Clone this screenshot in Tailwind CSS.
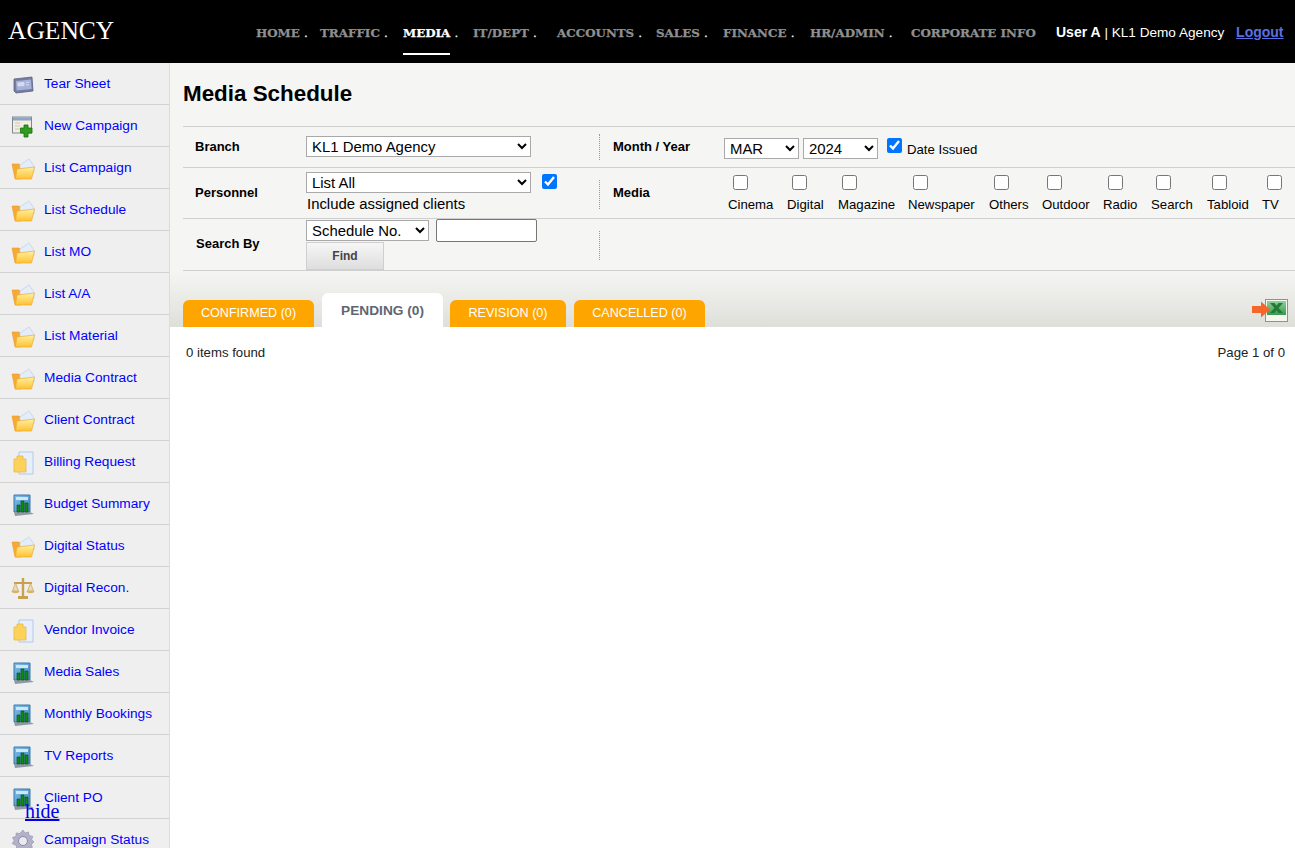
<!DOCTYPE html>
<html lang="en">
<head>
    <meta charset="UTF-8">
    <title>Media Schedule</title>
    <script src="https://cdn.jsdelivr.net/npm/@tailwindcss/browser@4"></script>
</head>
<body class="h-[848px] overflow-hidden bg-white font-['Liberation_Sans',Arial,sans-serif] relative">

    <!-- icon sprites -->
    <svg class="absolute w-0 h-0">
        <defs>
            <linearGradient id="fold" x1="0" y1="0" x2="0" y2="1"><stop offset="0" stop-color="#fff0a0"/><stop offset="1" stop-color="#fdc233"/></linearGradient>
            <linearGradient id="xls" x1="0" y1="0" x2="0" y2="1"><stop offset="0" stop-color="#8fd09b"/><stop offset="1" stop-color="#3a9a50"/></linearGradient>
            <linearGradient id="panel" x1="0" y1="0" x2="1" y2="1"><stop offset="0" stop-color="#7fc0ea"/><stop offset="1" stop-color="#3f86bd"/></linearGradient>
            <symbol id="i-folder" viewBox="0 0 24 24">
                <path d="M1 7h7l2 2v13H4z" fill="#f6a935" stroke="#ec9a2a" stroke-width=".6"/>
                <path d="M9 8l9-6 5 7v6H9z" fill="#e4edf9" stroke="#bcd0ea" stroke-width=".7"/>
                <path d="M4.500 22l1.500-10 17.500-2-3 12z" fill="url(#fold)" stroke="#f0ab2e" stroke-width=".7"/>
            </symbol>
            <symbol id="i-tear" viewBox="0 0 24 24">
                <path d="M3 6l18-2 1 14-17 2-2-2z" fill="#777d9e" stroke="#5d6283" stroke-width=".8"/>
                <path d="M5 8l15-1.500.6 9.500-15 1.500z" fill="#a6b2dc"/>
                <path d="M7 10l6-.5v3l-6 .5zM15 9.500l3-.3M15 12l3-.3" fill="#d5dbf2" stroke="#d5dbf2"/>
            </symbol>
            <symbol id="i-new" viewBox="0 0 24 24">
                <rect x="1.500" y="2" width="19" height="16" fill="#f2efe0" stroke="#7f8a90"/>
                <rect x="2" y="2.500" width="18" height="3" fill="#8ea4c4"/>
                <path d="M4 8h5M4 11h5M4 14h5" stroke="#c9c6b2"/>
                <path d="M13 10h4v3h4v5h-4v4h-4v-4H9.500v-5H13z" fill="#2f9d20" stroke="#1b6d12" stroke-width=".8"/>
            </symbol>
            <symbol id="i-doc" viewBox="0 0 24 24">
                <path d="M8 1h14v22H8z" fill="#e6effb" stroke="#b3c9e8"/>
                <path d="M3 8h3V5h6v3h3v13H3z" fill="#fcd25a" stroke="#edb745" stroke-width=".8"/>
            </symbol>
            <symbol id="i-chart" viewBox="0 0 24 24">
                <path d="M3 2h16v17H3z" fill="url(#panel)" stroke="#3c79aa"/>
                <path d="M3 19h16l4 2-19 2z" fill="#8d9aa5"/>
                <path d="M5 4h12v3H5z" fill="#cfe6f6"/>
                <path d="M6 12h3v7H6zM10 8h3v11h-3zM14 10h3v9h-3z" fill="#0f8a13" stroke="#064d09" stroke-width=".6"/>
            </symbol>
            <symbol id="i-scale" viewBox="0 0 24 24">
                <path d="M10.800 1h2.400v18H17v3H7v-3h3.800z" fill="#c9a04f"/>
                <path d="M3 6h18" stroke="#c9a04f" stroke-width="2"/>
                <path d="M1.500 14L4.500 6l3 8zM16.500 14l3-8 3 8z" fill="#eadbb8" stroke="#cfa95e" stroke-width=".8"/>
                <path d="M.5 14h8c0 3-8 3-8 0zM15.500 14h8c0 3-8 3-8 0z" fill="#d9b266"/>
            </symbol>
            <symbol id="i-gear" viewBox="0 0 24 24">
                <path d="M12 1l2 3 3.400-1 .8 3.500 3.600.9-1.100 3.300L23 13l-2.500 2.200.8 3.300-3.500.7-1 3.300-3-1.300-2.900 1.800-1.900-3-3.500.2.100-3.500L1.200 14.500l2-2.900L1.500 8.500l3.300-1L5.300 4l3.500.5z" fill="#b1b2c8" stroke="#8f90aa" stroke-width=".6"/>
                <circle cx="12" cy="12" r="4.500" fill="#e9e9f0" stroke="#8a8ba3"/>
            </symbol>
        </defs>
    </svg>

    <!-- Header -->
    <header class="h-[63px] bg-black flex text-white">
        <div class="w-[256px] pl-2 pt-[14px] font-['Liberation_Serif',serif] text-[25.500px] leading-[34px]">AGENCY</div>
        <nav class="w-[800px] h-[63px] relative font-['DejaVu_Serif',serif] font-bold text-[11.900px] leading-[16px] text-[#8f8f8f] [-webkit-text-stroke:0.25px]">
            <div class="flex pt-[25px]">
                <a class="w-[64px]">HOME <span class="text-white font-normal">.</span></a>
                <a class="w-[83px]">TRAFFIC <span class="text-white font-normal">.</span></a>
                <a class="w-[70px] text-white">MEDIA <span class="font-normal">.</span></a>
                <a class="w-[84px]">IT/DEPT <span class="text-white font-normal">.</span></a>
                <a class="w-[99px]">ACCOUNTS <span class="text-white font-normal">.</span></a>
                <a class="w-[67px]">SALES <span class="text-white font-normal">.</span></a>
                <a class="w-[87px]">FINANCE <span class="text-white font-normal">.</span></a>
                <a class="w-[101px]">HR/ADMIN <span class="text-white font-normal">.</span></a>
                <a class="whitespace-nowrap">CORPORATE INFO</a>
            </div>
            <div class="absolute left-[147px] top-[53px] w-[47px] h-[2px] bg-white"></div>
        </nav>
        <div class="pt-[24px] text-[13.600px] leading-[16px] whitespace-nowrap">
            <b class="text-[14px]">User A</b> | KL1 Demo Agency <a href="#" class="ml-[8px] text-[14px] font-bold text-[#5a6fe0] underline">Logout</a>
        </div>
    </header>

    <div class="flex h-[785px]">
        <!-- Sidebar -->
        <aside class="w-[170px] shrink-0 bg-[#efefef] border-r border-[#dcdcdc] text-[13.700px] text-[#0000ff] overflow-hidden">
            <a class="flex items-center h-[42px] pt-[2px] border-b border-[#d2d2d2] pl-[11px] gap-[9px]"><svg class="w-6 h-6"><use href="#i-tear"/></svg>Tear Sheet</a>
            <a class="flex items-center h-[42px] pt-[2px] border-b border-[#d2d2d2] pl-[11px] gap-[9px]"><svg class="w-6 h-6"><use href="#i-new"/></svg>New Campaign</a>
            <a class="flex items-center h-[42px] pt-[2px] border-b border-[#d2d2d2] pl-[11px] gap-[9px]"><svg class="w-6 h-6"><use href="#i-folder"/></svg>List Campaign</a>
            <a class="flex items-center h-[42px] pt-[2px] border-b border-[#d2d2d2] pl-[11px] gap-[9px]"><svg class="w-6 h-6"><use href="#i-folder"/></svg>List Schedule</a>
            <a class="flex items-center h-[42px] pt-[2px] border-b border-[#d2d2d2] pl-[11px] gap-[9px]"><svg class="w-6 h-6"><use href="#i-folder"/></svg>List MO</a>
            <a class="flex items-center h-[42px] pt-[2px] border-b border-[#d2d2d2] pl-[11px] gap-[9px]"><svg class="w-6 h-6"><use href="#i-folder"/></svg>List A/A</a>
            <a class="flex items-center h-[42px] pt-[2px] border-b border-[#d2d2d2] pl-[11px] gap-[9px]"><svg class="w-6 h-6"><use href="#i-folder"/></svg>List Material</a>
            <a class="flex items-center h-[42px] pt-[2px] border-b border-[#d2d2d2] pl-[11px] gap-[9px]"><svg class="w-6 h-6"><use href="#i-folder"/></svg>Media Contract</a>
            <a class="flex items-center h-[42px] pt-[2px] border-b border-[#d2d2d2] pl-[11px] gap-[9px]"><svg class="w-6 h-6"><use href="#i-folder"/></svg>Client Contract</a>
            <a class="flex items-center h-[42px] pt-[2px] border-b border-[#d2d2d2] pl-[11px] gap-[9px]"><svg class="w-6 h-6"><use href="#i-doc"/></svg>Billing Request</a>
            <a class="flex items-center h-[42px] pt-[2px] border-b border-[#d2d2d2] pl-[11px] gap-[9px]"><svg class="w-6 h-6"><use href="#i-chart"/></svg>Budget Summary</a>
            <a class="flex items-center h-[42px] pt-[2px] border-b border-[#d2d2d2] pl-[11px] gap-[9px]"><svg class="w-6 h-6"><use href="#i-folder"/></svg>Digital Status</a>
            <a class="flex items-center h-[42px] pt-[2px] border-b border-[#d2d2d2] pl-[11px] gap-[9px]"><svg class="w-6 h-6"><use href="#i-scale"/></svg>Digital Recon.</a>
            <a class="flex items-center h-[42px] pt-[2px] border-b border-[#d2d2d2] pl-[11px] gap-[9px]"><svg class="w-6 h-6"><use href="#i-doc"/></svg>Vendor Invoice</a>
            <a class="flex items-center h-[42px] pt-[2px] border-b border-[#d2d2d2] pl-[11px] gap-[9px]"><svg class="w-6 h-6"><use href="#i-chart"/></svg>Media Sales</a>
            <a class="flex items-center h-[42px] pt-[2px] border-b border-[#d2d2d2] pl-[11px] gap-[9px]"><svg class="w-6 h-6"><use href="#i-chart"/></svg>Monthly Bookings</a>
            <a class="flex items-center h-[42px] pt-[2px] border-b border-[#d2d2d2] pl-[11px] gap-[9px]"><svg class="w-6 h-6"><use href="#i-chart"/></svg>TV Reports</a>
            <a class="flex items-center h-[42px] pt-[2px] border-b border-[#d2d2d2] pl-[11px] gap-[9px]"><svg class="w-6 h-6"><use href="#i-chart"/></svg>Client PO</a>
            <a class="flex items-center h-[42px] pt-[2px] border-b border-[#d2d2d2] pl-[11px] gap-[9px]"><svg class="w-6 h-6"><use href="#i-gear"/></svg>Campaign Status</a>
        </aside>

        <!-- Main -->
        <main class="flex-1 min-w-0 flex flex-col">
            <div class="bg-[#f5f5f3] pl-[13px]">
                <h1 class="h-[63px] pt-[17px] text-[22.400px] leading-[28px] font-bold text-black">Media Schedule</h1>

                <!-- Filter rows -->
                <div class="border-t border-[#cfcfcf] text-[14px] text-black">
                    <div class="flex h-[41px] border-b border-[#cfcfcf]">
                        <div class="w-[416px] flex">
                            <b class="w-[123px] pl-3 pt-[12px] text-[13px] leading-[16px]">Branch</b>
                            <select class="mt-[9px] w-[225px] h-[21px] pl-[1px] border border-[#a9a9a9] bg-white text-[14.900px]"><option>KL1 Demo Agency</option></select>
                        </div>
                        <div class="mt-[7px] h-[26px] border-l border-dotted border-[#999] pl-[13px] flex">
                            <b class="w-[111px] pt-[5px] text-[13px] leading-[16px]">Month / Year</b>
                            <select class="mt-[4px] mr-1 w-[75px] h-[21px] pl-[1px] border border-[#a9a9a9] bg-white text-[14.900px] self-start"><option>MAR</option></select>
                            <select class="mt-[4px] w-[75px] h-[21px] pl-[1px] border border-[#a9a9a9] bg-white text-[14.900px] self-start"><option>2024</option></select>
                            <input type="checkbox" checked class="ml-[9px] mt-[4px] w-[15px] h-[15px] self-start">
                            <span class="ml-[5px] pt-[8px] text-[13.200px] leading-[16px]">Date Issued</span>
                        </div>
                    </div>

                    <div class="flex h-[51px] border-b border-[#cfcfcf]">
                        <div class="w-[416px] flex">
                            <b class="w-[123px] pl-3 pt-[17px] text-[13px] leading-[16px]">Personnel</b>
                            <div>
                                <div class="flex items-start pt-[4px]">
                                    <select class="w-[225px] h-[21px] pl-[1px] border border-[#a9a9a9] bg-white text-[14.900px]"><option>List All</option></select>
                                    <input type="checkbox" checked class="ml-[11px] mt-[2px] w-[15px] h-[15px]">
                                </div>
                                <p class="pl-px text-[14.900px] leading-[18px] mt-[2px]">Include assigned clients</p>
                            </div>
                        </div>
                        <div class="mt-[12px] h-[29px] border-l border-dotted border-[#999] pl-[13px] flex">
                            <b class="w-[115px] pt-[5px] text-[13px] leading-[16px]">Media</b>
                            <div class="flex -mt-[5px] text-[13.200px] leading-[16px]">
                                <label class="w-[59px]"><input type="checkbox" class="ml-[5px] w-[15px] h-[15px] block mb-[7px]">Cinema</label>
                                <label class="w-[51px]"><input type="checkbox" class="ml-[5px] w-[15px] h-[15px] block mb-[7px]">Digital</label>
                                <label class="w-[70px]"><input type="checkbox" class="ml-[4px] w-[15px] h-[15px] block mb-[7px]">Magazine</label>
                                <label class="w-[81px]"><input type="checkbox" class="ml-[5px] w-[15px] h-[15px] block mb-[7px]">Newspaper</label>
                                <label class="w-[53px]"><input type="checkbox" class="ml-[5px] w-[15px] h-[15px] block mb-[7px]">Others</label>
                                <label class="w-[61px]"><input type="checkbox" class="ml-[5px] w-[15px] h-[15px] block mb-[7px]">Outdoor</label>
                                <label class="w-[48px]"><input type="checkbox" class="ml-[5px] w-[15px] h-[15px] block mb-[7px]">Radio</label>
                                <label class="w-[56px]"><input type="checkbox" class="ml-[5px] w-[15px] h-[15px] block mb-[7px]">Search</label>
                                <label class="w-[55px]"><input type="checkbox" class="ml-[5px] w-[15px] h-[15px] block mb-[7px]">Tabloid</label>
                                <label><input type="checkbox" class="ml-[5px] w-[15px] h-[15px] block mb-[7px]">TV</label>
                            </div>
                        </div>
                    </div>

                    <div class="flex h-[52px] border-b border-[#cfcfcf]">
                        <div class="w-[416px] flex">
                            <b class="w-[123px] pl-[13px] pt-[17px] text-[13px] leading-[16px]">Search By</b>
                            <div>
                                <div class="flex items-center">
                                    <select class="w-[123px] h-[21px] pl-[1px] border border-[#a9a9a9] bg-white text-[14.900px]"><option>Schedule No.</option></select>
                                    <input type="text" class="ml-[7px] w-[101px] h-[23px] bg-white border border-[#777] rounded-[2px]">
                                </div>
                                <button class="block w-[78px] h-[28px] border border-[#cfcfcf] bg-gradient-to-b from-[#f6f6f6] to-[#dedede] text-[12px] font-bold text-[#444]">Find</button>
                            </div>
                        </div>
                        <div class="mt-[12px] h-[29px] border-l border-dotted border-[#999]"></div>
                    </div>
                </div>
            </div>

            <!-- Status tabs -->
            <div class="h-[56px] shrink-0 bg-gradient-to-b from-[#f5f5f3] to-[#dfdfda] pl-[13px] flex items-end text-[12.600px] relative">
                <a class="w-[131px] h-[27px] pt-px leading-[25px] text-center text-white bg-[#ffa500] rounded-t-[6px]">CONFIRMED (0)</a>
                <a class="w-[121px] h-[34px] ml-2 pt-[9px] leading-[18px] text-[13.700px] text-center font-bold text-[#5f6670] bg-white rounded-t-[6px]">PENDING (0)</a>
                <a class="w-[116px] h-[27px] ml-[7px] pt-px leading-[25px] text-center text-white bg-[#ffa500] rounded-t-[6px]">REVISION (0)</a>
                <a class="w-[131px] h-[27px] ml-2 pt-px leading-[25px] text-center text-white bg-[#ffa500] rounded-t-[6px]">CANCELLED (0)</a>
                <svg class="absolute right-[7px] top-[28px] w-[36px] h-[23px]" viewBox="0 0 36 23">
                    <rect x="13.500" y=".5" width="22" height="22" fill="#f4f8ef" stroke="#6aab70"/>
                    <rect x="15" y="2" width="19" height="14" fill="url(#xls)"/>
                    <path d="M18 4h4.500l2 2.700 2-2.700H31l-4.500 5 4.500 5h-4.500l-2-2.700-2 2.700H18l4.500-5z" fill="#237a38"/>
                    <path d="M0 7h9V2.500l9 8-9 8V14H0z" fill="#f4662a"/>
                </svg>
            </div>

            <!-- Results -->
            <div class="flex-1 bg-white px-[10px] pl-4 pt-[18px] flex justify-between text-[13.200px] leading-[16px] text-[#222]">
                <span>0 items found</span>
                <span>Page 1 of 0</span>
            </div>
        </main>
    </div>

    <a href="#" class="absolute left-[25px] top-[800px] font-['Liberation_Serif',serif] text-[20px] leading-[23px] text-[#0000ee] underline">hide</a>
</body>
</html>
